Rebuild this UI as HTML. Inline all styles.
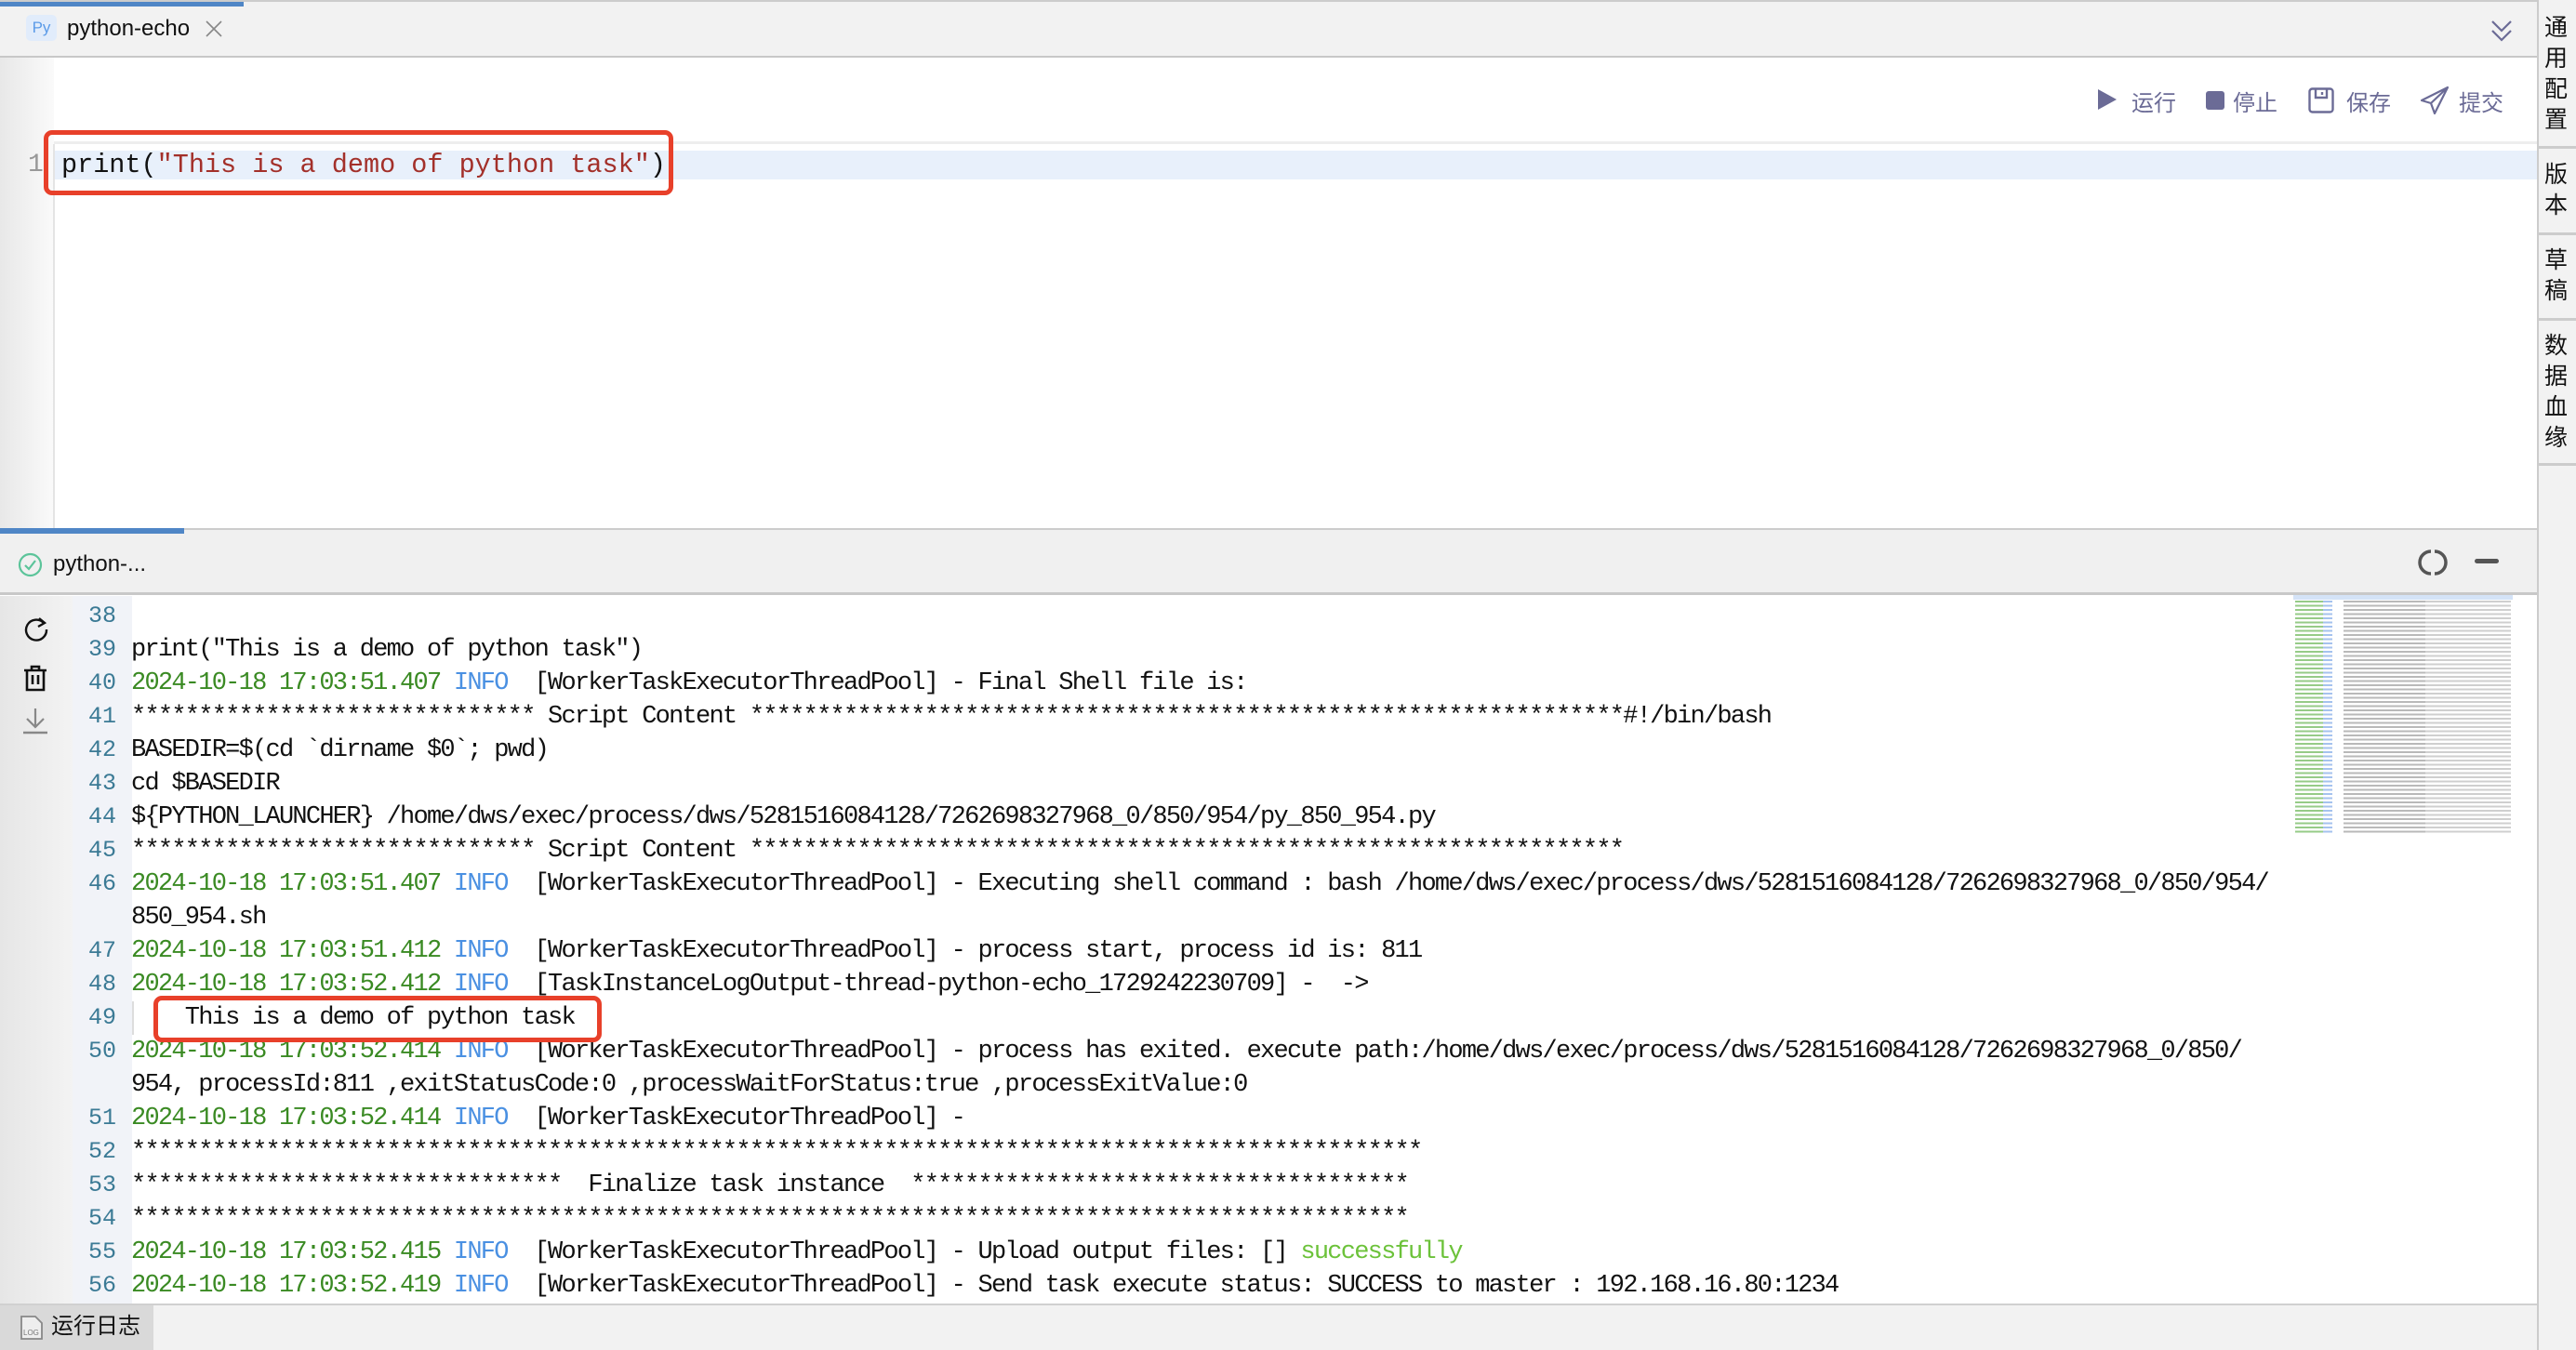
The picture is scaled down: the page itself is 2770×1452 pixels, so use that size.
<!DOCTYPE html>
<html><head><meta charset="utf-8"><style>
*{margin:0;padding:0;box-sizing:border-box}
html,body{width:2770px;height:1452px;overflow:hidden}
body{position:relative;background:#fff;font-family:"Liberation Sans","Noto Sans CJK SC",sans-serif}
.a{position:absolute}
.log{position:absolute;left:141px;top:645px;font-family:"Liberation Mono","DejaVu Sans Mono",monospace;font-size:27px;letter-spacing:-1.75px;line-height:36px;color:#111}
.log div{height:36px;white-space:pre}
.g{color:#3a8a23}.b{color:#4a90e2}.s{color:#6cc23a}
.ln{position:absolute;left:78px;top:641px;width:64px;font-family:"Liberation Mono",monospace;font-size:25px;line-height:36px;color:#3b7a95;text-align:center;background:#f1f3f8;height:761px;padding-top:4px}
.ln div{height:36px}
.tb{color:#6b6b96;font-size:24px}
.side div{position:absolute;left:2736px;font-size:25px;color:#111;line-height:25px}
</style></head><body>
<div class="a" style="left:0;top:0;width:2728px;height:62px;background:#f2f2f2;border-top:2px solid #ccc;border-bottom:2px solid #c8c8c8"></div>
<div class="a" style="left:0;top:2px;width:262px;height:5px;background:#4f86c6"></div>
<div class="a" style="left:28px;top:16px;width:33px;height:28px;background:#e1ecfb;border-radius:5px;color:#5b9be8;font-size:17px;text-align:center;line-height:28px">Py</div>
<div class="a" style="left:72px;top:16px;font-size:24px;color:#111;line-height:30px">python-echo</div>
<svg class="a" style="left:221px;top:22px" width="18" height="18"><path d="M1 1L17 17M17 1L1 17" stroke="#888" stroke-width="1.6"/></svg>
<svg class="a" style="left:2677px;top:20px" width="26" height="26"><path d="M3 3L13 13L23 3M3 13L13 23L23 13" stroke="#6b6b96" stroke-width="2.2" fill="none"/></svg>
<svg class="a" style="left:2255px;top:95px" width="22" height="24"><path d="M1 1L21 12L1 23Z" fill="#6b6b96"/></svg>
<div class="a tb" style="left:2292px;top:91px">运行</div>
<div class="a" style="left:2372px;top:98px;width:20px;height:20px;background:#6b6b96;border-radius:3px"></div>
<div class="a tb" style="left:2401px;top:91px">停止</div>
<svg class="a" style="left:2482px;top:94px" width="28" height="28"><rect x="1.5" y="1.5" width="25" height="25" rx="3" fill="none" stroke="#6b6b96" stroke-width="2.4"/><path d="M8 2V11H20V2M15 5V8" stroke="#6b6b96" stroke-width="2.4" fill="none"/></svg>
<div class="a tb" style="left:2523px;top:91px">保存</div>
<svg class="a" style="left:2602px;top:92px" width="32" height="32"><path d="M30 2L2 16L12 19L16 30Z M12 19L30 2" stroke="#6b6b96" stroke-width="2.2" fill="none" stroke-linejoin="round"/></svg>
<div class="a tb" style="left:2644px;top:91px">提交</div>
<div class="a" style="left:0;top:152px;width:2728px;height:3px;background:#eee"></div>
<div class="a" style="left:0;top:62px;width:58px;height:506px;background:linear-gradient(90deg,#e8e8e8,#fafafa)"></div>
<div class="a" style="left:57px;top:155px;width:2px;height:413px;background:#e4e4e4"></div>
<div class="a" style="left:59px;top:162px;width:2669px;height:31px;background:#e8f0fb"></div>
<div class="a" style="left:30px;top:160px;font-family:'Liberation Mono',monospace;font-size:28px;color:#999;line-height:36px">1</div>
<div class="a" style="left:66px;top:160px;font-family:'Liberation Mono',monospace;font-size:28.5px;color:#111;line-height:36px;white-space:pre">print(<span style="color:#a3302a">"This is a demo of python task"</span>)</div>
<div class="a" style="left:47px;top:140px;width:677px;height:70px;border:5px solid #e8402a;border-radius:9px"></div>
<div class="a" style="left:2728px;top:0;width:42px;height:1452px;background:#f2f2f2;border-left:2px solid #ccc"></div>
<div class="a" style="left:2730px;top:157px;width:40px;height:3px;background:#ccc"></div>
<div class="a" style="left:2730px;top:250px;width:40px;height:3px;background:#ccc"></div>
<div class="a" style="left:2730px;top:342px;width:40px;height:3px;background:#ccc"></div>
<div class="a" style="left:2730px;top:498px;width:40px;height:3px;background:#ccc"></div>
<div class="side">
<div style="top:18px">通</div><div style="top:51px">用</div><div style="top:84px">配</div><div style="top:117px">置</div>
<div style="top:176px">版</div><div style="top:209px">本</div>
<div style="top:268px">草</div><div style="top:301px">稿</div>
<div style="top:360px">数</div><div style="top:393px">据</div><div style="top:426px">血</div><div style="top:459px">缘</div>
</div>
<div class="a" style="left:0;top:568px;width:2728px;height:72px;background:#f0f0f0;border-top:2px solid #ccc;border-bottom:3px solid #c8c8c8"></div>
<div class="a" style="left:0;top:568px;width:198px;height:6px;background:#4f86c6"></div>
<svg class="a" style="left:19px;top:594px" width="27" height="27"><circle cx="13.5" cy="13.5" r="11.5" fill="none" stroke="#5cc49a" stroke-width="2.2"/><path d="M8 14L12 18L19 9" stroke="#5cc49a" stroke-width="2.2" fill="none"/></svg>
<div class="a" style="left:57px;top:592px;font-size:24px;color:#111;line-height:30px">python-...</div>
<svg class="a" style="left:2600px;top:589px" width="32" height="32"><path d="M14 4A12 12 0 0 0 14 28M18 4A12 12 0 0 1 18 28" stroke="#555" stroke-width="3.5" fill="none"/></svg>
<div class="a" style="left:2661px;top:601px;width:26px;height:5px;background:#555;border-radius:3px"></div>
<div class="a" style="left:0;top:641px;width:78px;height:761px;background:linear-gradient(90deg,#e6e6e6,#f3f3f3)"></div>
<svg class="a" style="left:25px;top:662px" width="28" height="28"><path d="M22 8A11 11 0 1 0 25 15" stroke="#111" stroke-width="2.4" fill="none"/><path d="M17 3L23 8L16 12" stroke="#111" stroke-width="2.4" fill="none"/></svg>
<svg class="a" style="left:24px;top:714px" width="28" height="30"><path d="M2 7H26M10 7V3H18V7M5 7V28H23V7M11 12V22M17 12V22" stroke="#111" stroke-width="2.6" fill="none"/></svg>
<svg class="a" style="left:24px;top:760px" width="28" height="30"><path d="M14 2V22M5 13L14 22L23 13" stroke="#888" stroke-width="2.2" fill="none"/><path d="M1 28H27" stroke="#888" stroke-width="2.4"/></svg>
<div class="ln"><div>38</div><div>39</div><div>40</div><div>41</div><div>42</div><div>43</div><div>44</div><div>45</div><div>46</div><div></div><div>47</div><div>48</div><div>49</div><div>50</div><div></div><div>51</div><div>52</div><div>53</div><div>54</div><div>55</div><div>56</div></div>
<div class="a" style="left:142px;top:1077px;width:2px;height:36px;background:#ddd"></div>
<div class="log"><div></div><div>print("This is a demo of python task")</div><div><span class="g">2024-10-18 17:03:51.407</span> <span class="b">INFO</span>  [WorkerTaskExecutorThreadPool] - Final Shell file is:</div><div>****************************** Script Content *****************************************************************#!/bin/bash</div><div>BASEDIR=$(cd `dirname $0`; pwd)</div><div>cd $BASEDIR</div><div>${PYTHON_LAUNCHER} /home/dws/exec/process/dws/5281516084128/7262698327968_0/850/954/py_850_954.py</div><div>****************************** Script Content *****************************************************************</div><div><span class="g">2024-10-18 17:03:51.407</span> <span class="b">INFO</span>  [WorkerTaskExecutorThreadPool] - Executing shell command : bash /home/dws/exec/process/dws/5281516084128/7262698327968_0/850/954/</div><div>850_954.sh</div><div><span class="g">2024-10-18 17:03:51.412</span> <span class="b">INFO</span>  [WorkerTaskExecutorThreadPool] - process start, process id is: 811</div><div><span class="g">2024-10-18 17:03:52.412</span> <span class="b">INFO</span>  [TaskInstanceLogOutput-thread-python-echo_1729242230709] -  -></div><div>    This is a demo of python task</div><div><span class="g">2024-10-18 17:03:52.414</span> <span class="b">INFO</span>  [WorkerTaskExecutorThreadPool] - process has exited. execute path:/home/dws/exec/process/dws/5281516084128/7262698327968_0/850/</div><div>954, processId:811 ,exitStatusCode:0 ,processWaitForStatus:true ,processExitValue:0</div><div><span class="g">2024-10-18 17:03:52.414</span> <span class="b">INFO</span>  [WorkerTaskExecutorThreadPool] -</div><div>************************************************************************************************</div><div>********************************  Finalize task instance  *************************************</div><div>***********************************************************************************************</div><div><span class="g">2024-10-18 17:03:52.415</span> <span class="b">INFO</span>  [WorkerTaskExecutorThreadPool] - Upload output files: [] <span class="s">successfully</span></div><div><span class="g">2024-10-18 17:03:52.419</span> <span class="b">INFO</span>  [WorkerTaskExecutorThreadPool] - Send task execute status: SUCCESS to master : 192.168.16.80:1234</div></div>
<div class="a" style="left:165px;top:1071px;width:482px;height:50px;border:5px solid #e8402a;border-radius:9px"></div>
<div class="a" style="left:2466px;top:640px;width:236px;height:5px;background:#d4e3f7"></div>
<div class="a" style="left:2468px;top:646px;width:232px;height:250px;background:
repeating-linear-gradient(180deg,rgba(255,255,255,0) 0 2px,#fff 2px 4.5px),
linear-gradient(90deg,#7cbf6a 0 30px,#8fb4ea 30px 40px,#fff 40px 52px,#a8a8a8 52px 140px,#c4c4c4 140px 232px);opacity:.8"></div>
<div class="a" style="left:0;top:1402px;width:2728px;height:50px;background:#f2f2f2;border-top:2px solid #d0d0d0"></div>
<div class="a" style="left:0;top:1404px;width:165px;height:48px;background:#d9d9d9"></div>
<svg class="a" style="left:21px;top:1414px" width="26" height="28"><path d="M2 2H17L24 9V26H2Z" fill="#eee" stroke="#888" stroke-width="1.8"/><text x="4" y="22" font-size="8" fill="#777" font-family="Liberation Sans">LOG</text></svg>
<div class="a" style="left:55px;top:1412px;font-size:24px;color:#111;line-height:30px">运行日志</div>
</body></html>
